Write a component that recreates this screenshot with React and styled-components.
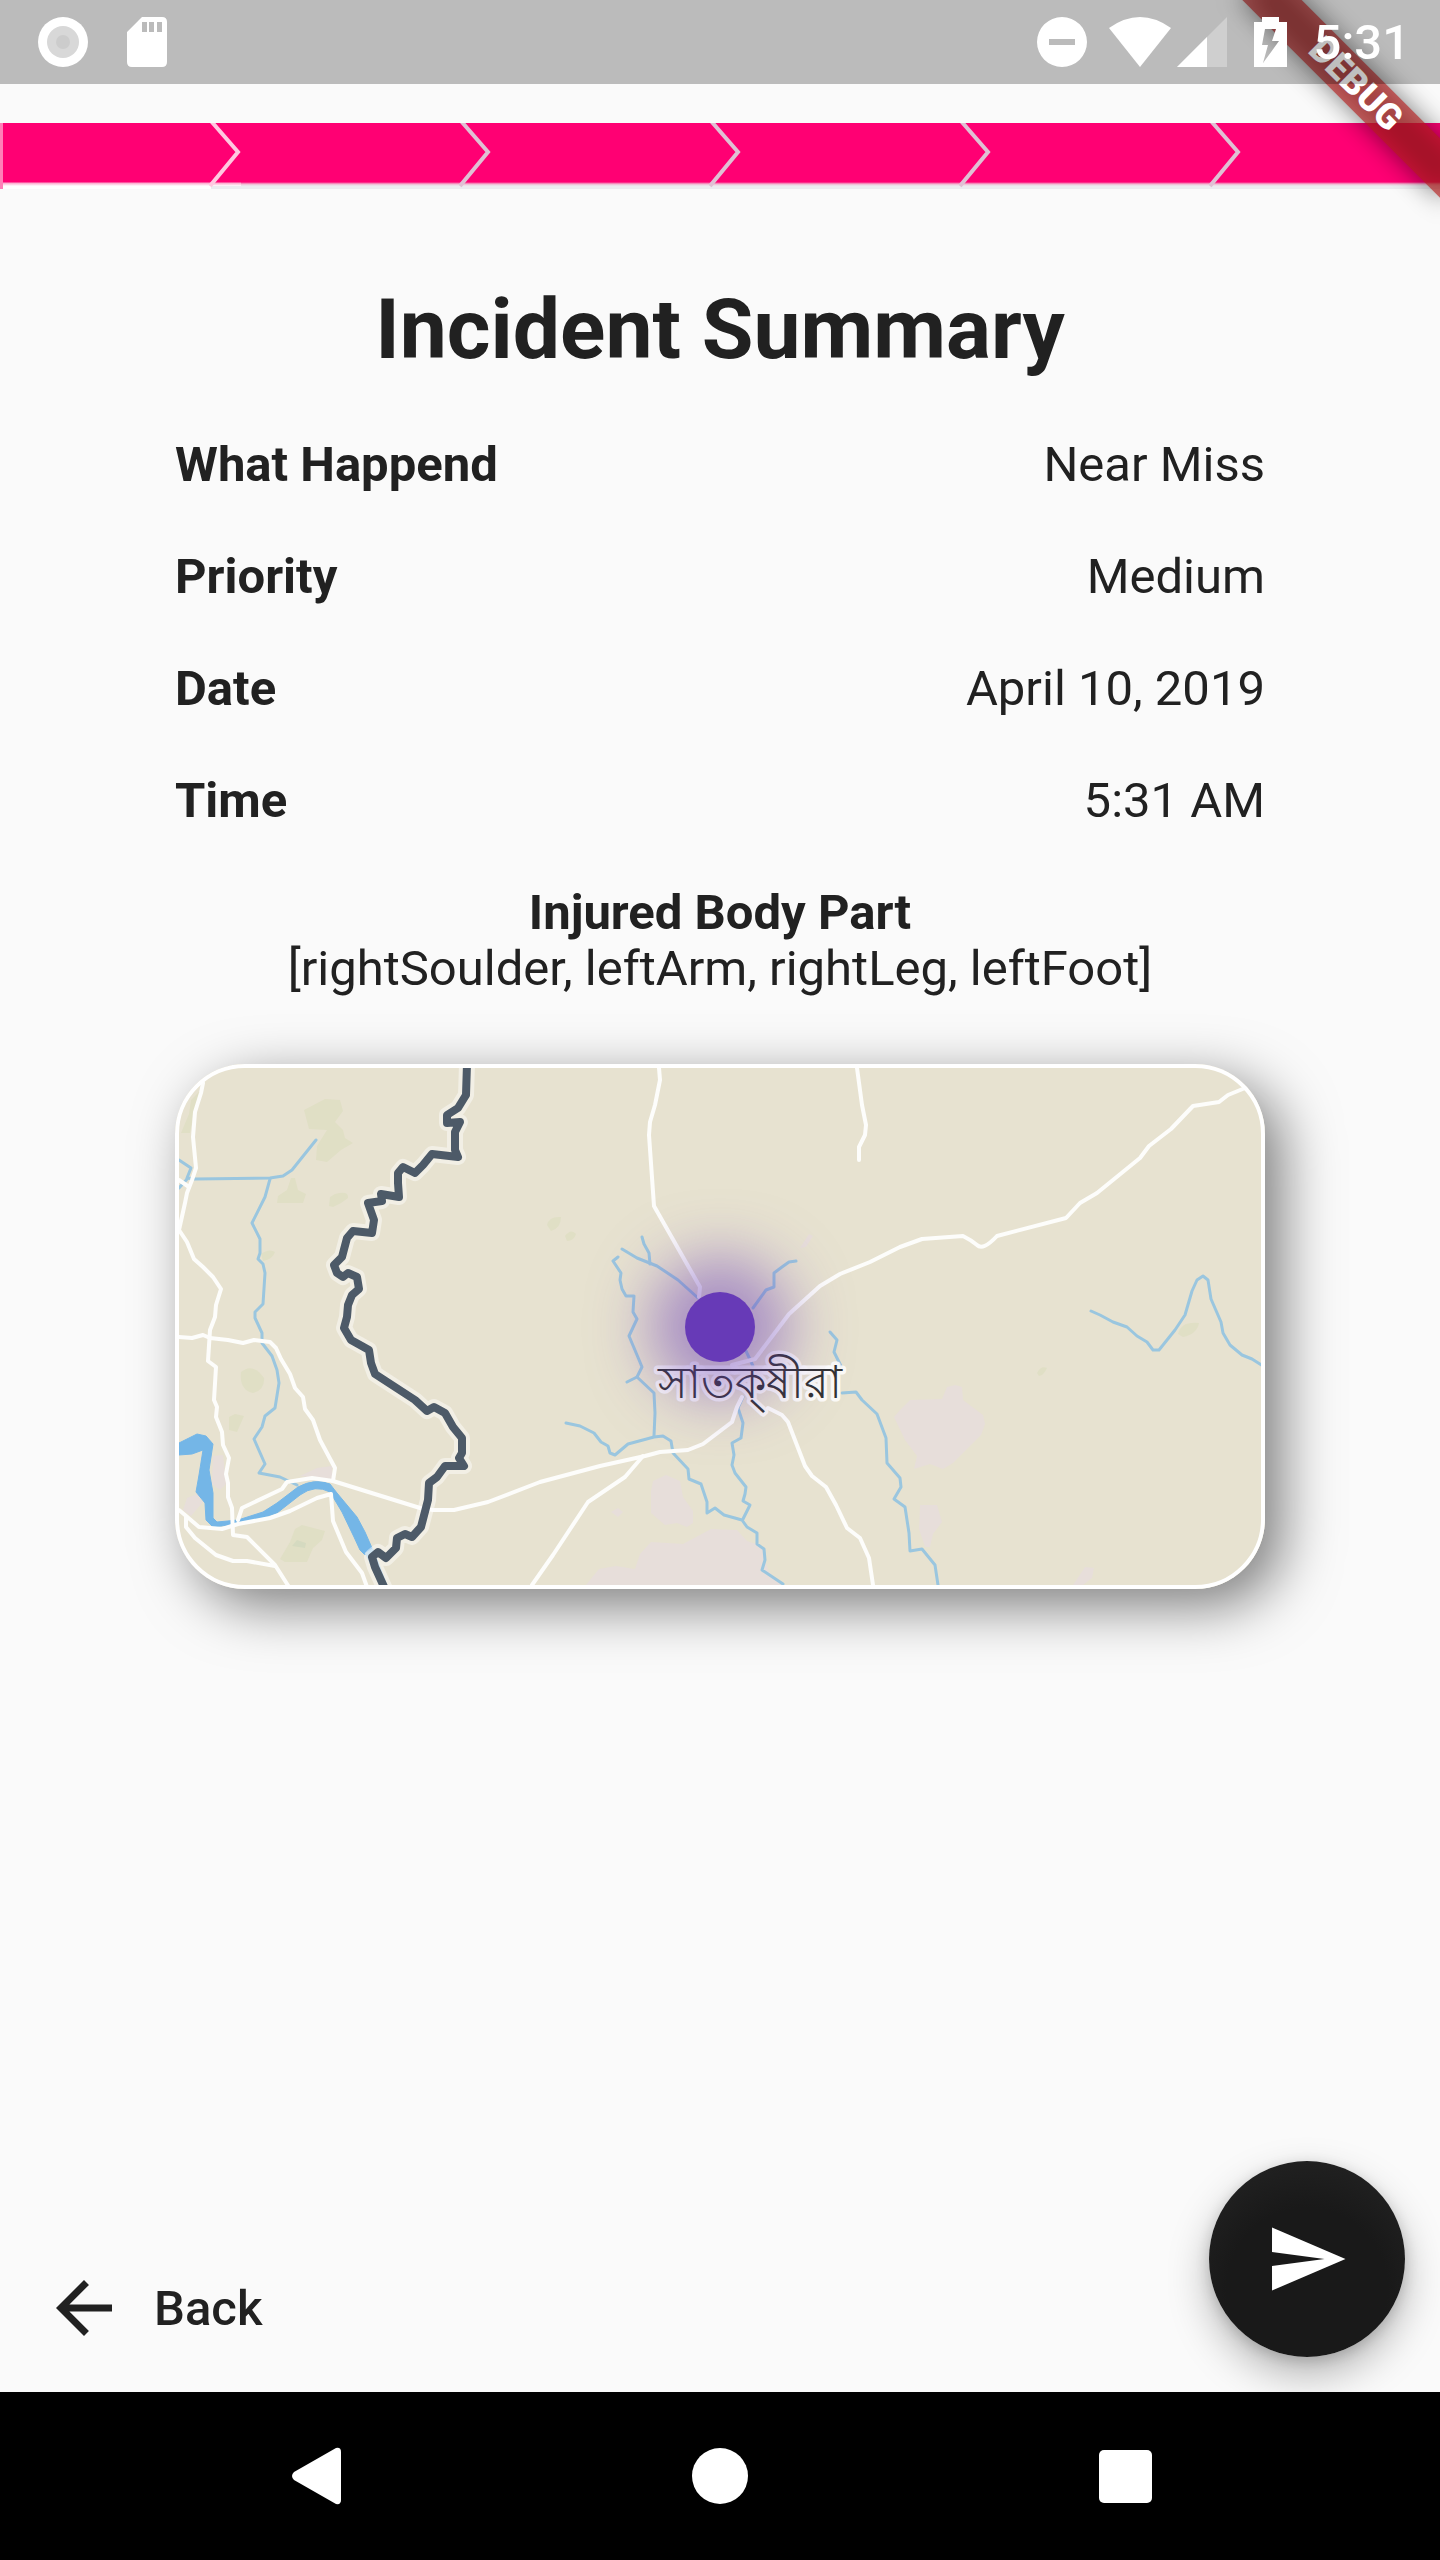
import React from 'react';
import styled, { createGlobalStyle } from 'styled-components';

const GlobalStyle = createGlobalStyle`
  * {
    box-sizing: border-box;
  }

  body {
    margin: 0;
    background: #fafafa;
    color: #212121;
    font-family: Roboto, "Noto Sans", sans-serif;
    font-size: 49px;
    line-height: 56px;
  }
`;

const Screen = styled.div`
  position: relative;
  display: flex;
  flex-direction: column;
  min-height: 100vh;
  overflow: hidden;
`;

const StatusBar = styled.header`
  position: relative;
  z-index: 2;
  display: flex;
  align-items: center;
  justify-content: space-between;
  height: 84px;
  padding: 0 30px 0 38px;
  background: rgba(0, 0, 0, 0.25);
  color: #fff;
`;

const StatusGroup = styled.div`
  display: flex;
  align-items: center;
  gap: ${(props) => props.$gap}px;
`;

const StatusIcon = styled.svg`
  display: block;
  height: 50px;
  fill: #fff;
`;

const Clock = styled.time`
  padding-top: 2px;
  font-weight: 500;
`;

const DebugBanner = styled.div`
  position: absolute;
  z-index: 1;
  top: 63px;
  right: -56px;
  width: 280px;
  height: 42px;
  color: #fff;
  font-size: 36px;
  font-weight: 900;
  line-height: 42px;
  text-align: center;
  transform: rotate(45deg);

  /* soft shadow first, then the translucent ribbon over it */
  &::before,
  &::after {
    content: '';
    position: absolute;
    inset: 0;
    z-index: -1;
  }

  &::before {
    background: rgba(0, 0, 0, 0.5);
    filter: blur(13px);
  }

  &::after {
    background: rgba(183, 28, 28, 0.63);
  }
`;

const Steps = styled.ol`
  display: flex;
  height: 66px;
  margin: 39px 0 0;
  padding: 0;
  overflow: hidden;
  list-style: none;
  background: linear-gradient(#ff0073 59px, #f2b4d0 61px, #ececf0 63px);
`;

const Chevron = styled.svg`
  width: 32px;
  height: 66px;
  fill: none;
  stroke: #e0c0d4;
  stroke-width: 4;
`;

const Step = styled.li`
  display: flex;
  flex: 0 0 250px;
  justify-content: flex-end;

  &:first-child {
    flex-basis: 241px;
    border-left: 3px solid #ff7fb8;
    background: linear-gradient(transparent 59px, #ffc4dd 61px, #fff 63px);
  }

  &:first-child ${Chevron} {
    stroke: #ffc8e0;
  }
`;

const Content = styled.main`
  flex: 1;
  padding: 92px 175px 0;
`;

const Title = styled.h1`
  margin: 0 0 30px;
  font-size: 84px;
  font-weight: 700;
  line-height: 98px;
  text-align: center;
`;

const Details = styled.dl`
  margin: 0;
`;

const Row = styled.div`
  display: flex;
  flex-direction: ${(props) => (props.$stacked ? 'column' : 'row')};
  align-items: center;
  justify-content: space-between;
  padding: 28px 0;
`;

const Label = styled.dt`
  font-weight: 700;
`;

const Value = styled.dd`
  margin: 0;
`;

const MapCard = styled.section`
  position: relative;
  height: 525px;
  margin-top: 39px;
  border-radius: 70px;
  background: #fff;
  box-shadow: 17px 17px 56px rgba(0, 0, 0, 0.5);
  overflow: hidden;
`;

const MapDrawing = styled.svg`
  display: block;
  width: 100%;
  height: 100%;
  fill: none;
  stroke-linejoin: round;
  stroke-linecap: round;
`;

const MapFrame = styled.div`
  position: absolute;
  inset: 0;
  border: 4px solid #fff;
  border-radius: 70px;
`;

const Marker = styled.div`
  position: absolute;
  top: 50%;
  left: 50%;
  width: 70px;
  height: 70px;
  border-radius: 50%;
  background: #673ab7;
  box-shadow: 0 0 60px 35px rgba(103, 58, 183, 0.5);
  transform: translate(-50%, -50%);
`;

const Actions = styled.footer`
  display: flex;
  align-items: flex-end;
  justify-content: space-between;
  padding: 0 35px 35px 42px;
`;

const BackButton = styled.button`
  display: flex;
  align-items: center;
  gap: 28px;
  height: 98px;
  padding: 0;
  border: 0;
  background: none;
  color: inherit;
  font: inherit;
  font-weight: 500;
  cursor: pointer;
`;

const BackText = styled.span`
  padding-top: 2px;
`;

const SendButton = styled.button`
  display: flex;
  align-items: center;
  justify-content: center;
  width: 196px;
  height: 196px;
  padding: 0;
  border: 0;
  border-radius: 50%;
  background: radial-gradient(circle at 50% 65%, #191919 50%, #222 85%);
  box-shadow: 0 18px 42px rgba(0, 0, 0, 0.28), 0 4px 14px rgba(0, 0, 0, 0.16);
  color: #fff;
  cursor: pointer;
`;

const ActionIcon = styled.svg`
  width: 84px;
  height: 84px;
  fill: currentColor;
`;

const NavBar = styled.nav`
  display: grid;
  grid-template-columns: repeat(3, 1fr);
  height: 168px;
  padding: 0 111px;
  background: #000;
`;

const NavButton = styled.button`
  display: flex;
  align-items: center;
  justify-content: center;
  padding: 0;
  border: 0;
  background: none;
  color: #fff;
  cursor: pointer;
`;

const details = [
  { label: 'What Happend', value: 'Near Miss' },
  { label: 'Priority', value: 'Medium' },
  { label: 'Date', value: 'April 10, 2019' },
  { label: 'Time', value: '5:31 AM' },
];

const steps = [1, 2, 3, 4, 5, 6];

const parks = [
  'M129 46L150 35 165 36 168 47 160 58 168 66 170 74 178 79 166 86 152 98 141 96 142 82 152 66 134 65z',
  'M116 114L120 114 123 126 131 130 128 139 102 139 103 132 112 126z',
  'M160 130Q174 126 173 134 166 140 158 143L154 142 155 133z',
  'M24 28L18 52 15 69 6 69 14 50 16 36z',
  'M86 190Q94 184 100 188 98 195 88 197z',
  'M66 308Q78 298 89 314 90 326 78 329 64 326 66 308z',
  'M54 353L60 350 69 352 62 368 54 366z',
  'M127 461L150 467 147 476 138 484 132 498 110 498 105 495 115 478 120 465z',
  'M372 161Q374 152 386 153 386 164 376 167z',
  'M390 172Q396 164 401 170 399 177 392 177z',
  'M1003 270Q1006 257 1024 259 1022 270 1008 273z',
  'M862 309Q866 301 872 304 869 311 864 312z',
];

const towns = [
  'M38 392L48 391 51 420 45 426 37 420z',
  'M22 430L28 438 16 452 8 446 12 434z',
  'M125 412L142 404 157 402 157 416z',
  'M476 427L478 417 491 411 505 417 508 433 518 447 518 459 512 463 502 459 490 461 476 449z',
  'M436 448L443 444 448 448 443 453z',
  'M411 521L424 505 441 502 460 505 465 490 476 478 508 480 536 465 562 466 572 477 584 481 589 486 590 496 594 508 608 521z',
  'M719 353L725 346 735 336 767 335 772 323 780 321 787 323 788 336 808 351 810 360 806 371 778 399 768 405 755 400 739 405 742 392 730 376z',
  'M745 441L762 441 767 458 758 470 755 483 750 483 744 465z',
  'M898 521L910 503 919 504 917 514 908 521z',
  'M625 184L634 170 638 172 631 183z',
];

const streams = [
  'M141 76L117 106 108 112 95 114 20 115 13 114 4 124',
  'M4 96L16 104 12 114',
  'M95 115L90 133 77 159 85 175 85 189 83 195 88 200 90 209 88 240 80 248 80 254 87 269 87 279 97 292 102 306 104 319 100 344 90 352 87 363 79 375 90 400 84 409 105 413 122 421',
  'M467 173L469 180 474 189 475 200',
  'M447 185L462 194 482 202 503 216 523 234',
  'M443 193L438 197 446 209 445 216 447 225 451 232 459 232 458 248 462 255 454 272 462 291 467 303 462 313 452 318',
  'M462 313L479 329 480 349 479 372',
  'M391 359L405 362 419 369 426 378 433 382 435 389 440 391 453 380 479 373 488 372 496 377 498 389 513 405 514 415 526 420 532 438 532 449 540 444 549 451 567 456 572 463 582 469 582 480 589 485 590 496 587 506 608 520',
  'M568 333L563 344 568 359 566 374 557 379 559 391 557 401 560 409 571 423 570 430 568 437 575 441 568 455',
  'M621 197L614 198 607 203 599 209 599 223 591 226 578 244',
  'M571 287L578 302',
  'M655 268L662 276 659 288 666 302',
  'M667 329L681 328 687 336 702 350 711 374 712 399 725 414 726 423 719 435 730 443 734 469 735 487 747 485 760 501 763 521',
  'M916 247L925 251 938 258 952 263 962 272 972 278 978 286 984 286 992 276 1000 266 1010 251 1017 227 1022 216 1028 212 1033 216 1036 235 1046 258 1048 269 1055 281 1067 291 1077 295 1088 302',
];

const roads = [
  'M28 19L26 29 20 48 18 73 21 104 17 116 12 129 10 139 4 166 12 178 19 195 28 203 38 213 46 225 41 241 40 253 35 266 33 297 41 303 39 336 42 343 41 353 47 368 48 381 54 394 51 410 53 419 53 433 57 444 58 471 72 473 100 501 114 523',
  'M4 116L14 123',
  'M4 273L17 274 28 271 35 274 53 276 68 279 79 276 95 278 101 284 106 295 115 310 120 324 128 333 130 345 138 356 145 376 160 404 158 417',
  'M63 456L67 444 107 425 112 418 137 414 158 417 245 444 258 446 279 446 313 438 365 418 425 402 470 392 485 388 513 386 528 380 557 358 562 343 567 333',
  'M557 301L580 295 614 250 645 222 665 210 695 198 725 183 747 175 788 172 Q796 176 802 181 808 187 822 172L891 154 905 139 922 129 965 94 974 82 996 65 1018 42 1044 38 1053 31 1075 22',
  'M4 446L10 451 24 463 47 465 63 460 95 454 115 447 142 434 156 430 158 457 171 488 187 509 192 523',
  'M11 453L11 463 20 474 41 491 58 497 72 497 100 502',
  'M468 392L450 413 413 438 378 491 357 521',
  'M593 344L607 351 613 358 630 402 637 412 651 423 661 441 672 464 685 474 694 494 698 521',
  'M484 4L485 16 480 41 475 58 474 71 479 142 525 223 524 233',
  'M682 4L687 41 691 61 690 71 684 83 684 96',
];

const river =
  'M4 379L22 370 31 372 38 380 34 406 38 429 38 454 42 458 63 456 88 448 102 439 123 423Q140 414 155 420L162 429 182 453 190 468 197 484 190 491 185 486 179 473 167 448 155 428Q140 420 125 431L102 449 80 457 63 460 38 463 31 456 30 439 21 428 24 411 28 386 17 390 4 391z';

const border =
  'M292 0L291 31 283 44 272 51 272 59 285 58 280 68 280 86 283 93 257 90 248 101 240 109 228 103 223 109 223 119 224 133 206 130 207 137 193 139 199 156 197 169 178 167 172 174 167 193 159 201 162 209 168 213 173 209 182 213 184 225 177 231 173 241 172 253 169 264 176 276 194 286 196 299 200 310 240 336 252 347 259 343 270 349 278 363 287 374 287 389 284 394 289 402 270 402 262 413 254 419 253 436 246 463 237 473 230 470 222 474 221 484 211 494 203 488 197 493 200 503 210 525';

const IncidentMap = () => (
  <MapDrawing viewBox="0 0 1090 525" preserveAspectRatio="xMidYMid slice" role="img" aria-label="Incident location">
    <rect width="1090" height="525" fill="#e7e2d0" />
    {parks.map((d) => <path key={d} d={d} fill="#e0dfc5" />)}
    <path d="M117 482L122 476 131 479 130 484z" fill="#d5dac0" />
    {towns.map((d) => <path key={d} d={d} fill="#e7deda" />)}
    {streams.map((d) => <path key={d} d={d} stroke="#9ac6df" strokeWidth="3" />)}
    <path d={river} fill="#74b6e7" stroke="#74b6e7" />
    <path d="M190 489L198 484 214 525H206z" fill="#a9cfe8" />
    {roads.map((d) => <path key={d} d={d} stroke="#fdfdfb" strokeWidth="4" />)}
    <path d={border} stroke="#fff" strokeOpacity="0.45" strokeWidth="16" />
    <path d={border} stroke="#4d5a68" strokeWidth="8" />
    <text
      x="575"
      y="334"
      textAnchor="middle"
      fontSize="45"
      fontWeight="500"
      fill="#333"
      stroke="#fff"
      strokeOpacity="0.85"
      strokeWidth="7"
      paintOrder="stroke"
    >
      সাতক্‌ষীরা
    </text>
  </MapDrawing>
);

const App = () => (
  <>
    <GlobalStyle />
    <Screen>
      <StatusBar>
        <StatusGroup $gap={39}>
          <StatusIcon viewBox="0 0 50 50" width="50">
            <circle cx="25" cy="25" r="25" />
            <circle cx="25" cy="25" r="16" fill="#d8d8d8" />
            <circle cx="25" cy="25" r="7" fill="#ccc" />
          </StatusIcon>
          <StatusIcon viewBox="0 0 40 50" width="40">
            <path
              fillRule="evenodd"
              d="M15 0H35Q40 0 40 5V45Q40 50 35 50H5Q0 50 0 45V15zM15 5V15H20V5zM22 5V15H27V5zM30 5V15H35V5z"
            />
          </StatusIcon>
        </StatusGroup>
        <StatusGroup $gap={27}>
          <StatusGroup $gap={22}>
            <StatusIcon viewBox="0 0 50 50" width="50">
              <path fillRule="evenodd" d="M25 0A25 25 0 1 0 25 50A25 25 0 1 0 25 0zM12 22H38V28H12z" />
            </StatusIcon>
            <StatusGroup $gap={6}>
              <StatusIcon viewBox="0 0 62 50" width="62">
                <path d="M0 11Q31 -11 62 11L31 50z" />
              </StatusIcon>
              <StatusIcon viewBox="0 0 50 50" width="50">
                <path d="M50 0V50H0z" fillOpacity="0.3" />
                <path d="M30 20V50H0z" />
              </StatusIcon>
            </StatusGroup>
          </StatusGroup>
          <StatusIcon viewBox="0 0 33 50" width="33">
            <path fillRule="evenodd" d="M8 0H25V5H33V50H0V5H8zM11 12H22L18 24H25L9 46L14 28H8z" />
          </StatusIcon>
          <Clock>5:31</Clock>
        </StatusGroup>
      </StatusBar>
      <DebugBanner>DEBUG</DebugBanner>

      <Steps aria-label="Progress">
        {steps.map((step) => (
          <Step key={step}>
            {step < 6 && (
              <Chevron viewBox="0 0 32 66">
                <path d="M2 63H32V66H2z" fill="#ececf0" stroke="none" />
                <path d="M2 -2L29 29L1 63" />
              </Chevron>
            )}
          </Step>
        ))}
      </Steps>

      <Content>
        <Title>Incident Summary</Title>
        <Details>
          {details.map(({ label, value }) => (
            <Row key={label}>
              <Label>{label}</Label>
              <Value>{value}</Value>
            </Row>
          ))}
          <Row $stacked>
            <Label>Injured Body Part</Label>
            <Value>[rightSoulder, leftArm, rightLeg, leftFoot]</Value>
          </Row>
        </Details>
        <MapCard>
          <IncidentMap />
          <Marker />
          <MapFrame />
        </MapCard>
      </Content>

      <Actions>
        <BackButton type="button">
          <ActionIcon viewBox="0 0 24 24">
            <path d="M20 11H7.83l5.59-5.59L12 4l-8 8 8 8 1.41-1.41L7.83 13H20v-2z" />
          </ActionIcon>
          <BackText>Back</BackText>
        </BackButton>
        <SendButton type="button" aria-label="Send">
          <ActionIcon viewBox="0 0 24 24">
            <path d="M2.01 21L23 12 2.01 3 2 10l15 2-15 2z" />
          </ActionIcon>
        </SendButton>
      </Actions>

      <NavBar>
        <NavButton type="button" aria-label="System back">
          <ActionIcon viewBox="0 0 84 84">
            <path d="M22 38L64 14Q69 13 69 18V66Q69 71 64 70L22 46Q18 42 22 38z" />
          </ActionIcon>
        </NavButton>
        <NavButton type="button" aria-label="Home">
          <ActionIcon viewBox="0 0 84 84">
            <circle cx="42" cy="42" r="28" />
          </ActionIcon>
        </NavButton>
        <NavButton type="button" aria-label="Recent apps">
          <ActionIcon viewBox="0 0 84 84">
            <rect x="15" y="16" width="53" height="53" rx="5" />
          </ActionIcon>
        </NavButton>
      </NavBar>
    </Screen>
  </>
);

export default App;
